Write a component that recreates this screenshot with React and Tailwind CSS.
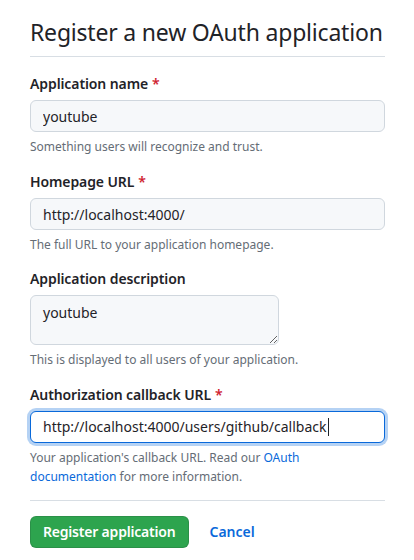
import React from "react";

const Label = ({ children, required }) => (
  <label className="block text-sm leading-5 font-semibold tracking-[-0.1px] text-[#1f2328]">
    {children}
    {required && <span className="ml-1 text-[#cf222e]">*</span>}
  </label>
);

const Note = ({ children }) => (
  <p className="mt-[5px] text-xs leading-[19px] text-[#656d76]">{children}</p>
);

const inputCls =
  "mt-[6px] block h-8 w-full rounded-md border border-[#d0d7de] bg-[#f6f8fa] px-3 text-sm text-[#1f2328] outline-none";

export default function App() {
  return (
    <div className="min-h-[560px] bg-white pl-[30px] pr-[29px] pt-[14px] font-['Noto_Sans',sans-serif] text-[#1f2328]">
      {/* Heading */}
      <div className="border-b border-[#d8dee4] pb-[6px]">
        <h1 className="whitespace-nowrap text-[23px] leading-9 font-normal tracking-[-0.2px]">
          Register a new OAuth application
        </h1>
      </div>

      <form>
        <div className="mt-[17px]">
          <Label required>Application name</Label>
          <input className={inputCls} readOnly value="youtube" />
          <Note>Something users will recognize and trust.</Note>
        </div>

        <div className="mt-[16px]">
          <Label required>Homepage URL</Label>
          <input className={inputCls} readOnly value="http://localhost:4000/" />
          <Note>The full URL to your application homepage.</Note>
        </div>

        <div className="mt-[15px]">
          <Label>Application description</Label>
          <textarea
            className="mt-[6px] block h-[50px] w-[249px] rounded-md border border-[#d0d7de] bg-[#f6f8fa] px-3 py-[7px] text-sm text-[#1f2328] outline-none"
            readOnly
            value="youtube"
          />
          <Note>This is displayed to all users of your application.</Note>
        </div>

        <div className="mt-[16px]">
          <Label required>Authorization callback URL</Label>
          <div className="mt-[6px] flex h-8 w-full items-center rounded-md border border-[#0969da] bg-white px-3 text-sm text-[#1f2328] shadow-[0_0_0_3px_rgba(9,105,218,0.3)]">
            <span>http://localhost:4000/users/github/callback</span>
            <span className="ml-px h-[18px] w-px bg-[#1f2328]" />
          </div>
          <p className="mt-[5px] w-[290px] text-xs leading-[19px] text-[#656d76]">
            Your application's callback URL. Read our{" "}
            <a href="#" className="text-[#0969da]">
              OAuth documentation
            </a>{" "}
            for more information.
          </p>
        </div>

        <div className="mt-[14px] border-t border-[#d8dee4] pt-[15px]">
          <div className="flex items-center gap-[21px]">
            <button
              type="button"
              className="h-8 rounded-md border border-[rgba(31,35,40,0.15)] bg-[#2da44e] px-3 text-sm font-semibold tracking-[-0.2px] text-white"
            >
              Register application
            </button>
            <a href="#" className="text-sm font-semibold text-[#0969da]">
              Cancel
            </a>
          </div>
        </div>
      </form>
    </div>
  );
}
